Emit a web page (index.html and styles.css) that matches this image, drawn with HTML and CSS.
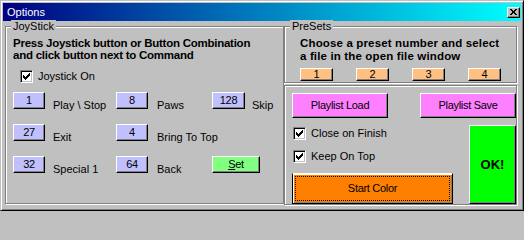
FILE: index.html
```html
<!DOCTYPE html>
<html>
<head>
<meta charset="utf-8">
<title>Options</title>
<link rel="stylesheet" href="styles.css">
</head>
<body>
<div class="window">
  <div class="titlebar">
    <span class="title">Options</span>
    <button class="close" aria-label="Close">
      <svg width="7" height="6" viewBox="0 0 7 6" shape-rendering="crispEdges"><path d="M0 0h2v1H0zM5 0h2v1H5zM1 1h2v1H1zM4 1h2v1H4zM2 2h3v2H2zM1 4h2v1H1zM4 4h2v1H4zM0 5h2v1H0zM5 5h2v1H5z" fill="#000"/></svg>
    </button>
  </div>
  <div class="client">
    <div class="group joy">
      <div class="legend">JoyStick</div>
      <p class="hint hint-left">Press Joystick button or Button Combination<br>and click button next to Command</p>
      <label class="check joy-on"><span class="box"><svg width="7" height="7" viewBox="0 0 7 7" shape-rendering="crispEdges"><path d="M6 0h1v1H6zM5 1h2v1H5zM0 2h1v1H0zM4 2h3v1H4zM0 3h2v1H0zM3 3h3v1H3zM0 4h5v1H0zM1 5h3v1H1zM2 6h1v1H2z" fill="#000"/></svg></span>Joystick On</label>
      <div class="cmds">
        <button class="btn cmd">1</button><span class="lbl l1">Play \ Stop</span>
        <button class="btn cmd">8</button><span class="lbl l2">Paws</span>
        <button class="btn cmd">128</button><span class="lbl l3">Skip</span>
        <button class="btn cmd">27</button><span class="lbl l1">Exit</span>
        <button class="btn cmd">4</button><span class="lbl l2">Bring To Top</span>
        <span class="empty"></span><span class="empty"></span>
        <button class="btn cmd">32</button><span class="lbl l1">Special 1</span>
        <button class="btn cmd">64</button><span class="lbl l2">Back</span>
        <button class="btn set"><u>S</u>et</button>
      </div>
    </div>
    <div class="right">
      <div class="group presets">
        <div class="legend">PreSets</div>
        <p class="hint hint-right">Choose a preset number and select<br>a file in the open file window</p>
        <div class="preset-row">
          <button class="btn preset">1</button>
          <button class="btn preset">2</button>
          <button class="btn preset">3</button>
          <button class="btn preset">4</button>
        </div>
      </div>
      <div class="group actions">
        <div class="playlists">
          <button class="btn playlist">Playlist Load</button>
          <button class="btn playlist">Playlist Save</button>
        </div>
        <div class="lower">
          <div class="opts">
            <label class="check opt first"><span class="box"><svg width="7" height="7" viewBox="0 0 7 7" shape-rendering="crispEdges"><path d="M6 0h1v1H6zM5 1h2v1H5zM0 2h1v1H0zM4 2h3v1H4zM0 3h2v1H0zM3 3h3v1H3zM0 4h5v1H0zM1 5h3v1H1zM2 6h1v1H2z" fill="#000"/></svg></span>Close on Finish</label>
            <label class="check opt"><span class="box"><svg width="7" height="7" viewBox="0 0 7 7" shape-rendering="crispEdges"><path d="M6 0h1v1H6zM5 1h2v1H5zM0 2h1v1H0zM4 2h3v1H4zM0 3h2v1H0zM3 3h3v1H3zM0 4h5v1H0zM1 5h3v1H1zM2 6h1v1H2z" fill="#000"/></svg></span>Keep On Top</label>
            <button class="btn start">Start Color</button>
          </div>
          <button class="btn ok">OK!</button>
        </div>
      </div>
    </div>
  </div>
</div>
</body>
</html>
```
FILE: styles.css
```css
* { box-sizing: border-box; }

body {
  margin: 0;
  background: #c0c0c0;
  font-family: "Liberation Sans", Arial, sans-serif;
  font-size: 11px;
  color: #000;
}

.window {
  width: 524px;
  height: 211px;
  border: 1px solid;
  border-color: #c0c0c0 #000 #000 #c0c0c0;
  box-shadow: inset 1px 1px #fff, inset -1px -1px #808080;
  padding: 2px;
  background: #c0c0c0;
}

.titlebar {
  height: 18px;
  display: flex;
  align-items: center;
  justify-content: space-between;
  padding: 0 1px 0 4px;
  background: linear-gradient(to right, #000080, #00ffff);
  color: #fff;
}

.title {
  font-size: 11px;
  line-height: 13px;
}

.close {
  appearance: none;
  margin: 0;
  padding: 0;
  width: 13px;
  height: 11px;
  display: flex;
  align-items: center;
  justify-content: center;
  background: #c0c0c0;
  border: 1px solid;
  border-color: #fff #000 #000 #fff;
  box-shadow: inset -1px -1px #808080;
}

.close svg { display: block; }

.client {
  display: flex;
  padding: 5px 0 0 2px;
}

.group {
  display: flex;
  flex-direction: column;
  border: 1px solid #808080;
  box-shadow: inset 1px 1px #fff, 1px 1px #fff;
}

.legend {
  align-self: flex-start;
  margin: -7px 0 0 5px;
  padding: 0 2px;
  line-height: 13px;
  background: #c0c0c0;
  white-space: nowrap;
}

.joy {
  width: 279px;
  height: 178px;
}

.hint {
  margin: 4px 0 0;
  font-weight: bold;
  font-size: 11.5px;
  white-space: nowrap;
}

.hint-left {
  padding-left: 7px;
  line-height: 12px;
  letter-spacing: -0.25px;
}

.hint-right {
  padding-left: 15px;
  line-height: 13px;
  letter-spacing: 0.15px;
}

.check {
  display: flex;
  align-items: center;
  gap: 5px;
  height: 13px;
  line-height: 13px;
  white-space: nowrap;
}

.box {
  width: 13px;
  height: 13px;
  display: flex;
  align-items: center;
  justify-content: center;
  background: #fff;
  border: 1px solid;
  border-color: #808080 #fff #fff #808080;
  box-shadow: inset 1px 1px #000, inset -1px -1px #c0c0c0;
}

.box svg { display: block; }

.joy-on {
  margin-top: 9px;
  padding-left: 14px;
}

.btn {
  appearance: none;
  margin: 0;
  padding: 0;
  font-family: "Liberation Sans", Arial, sans-serif;
  font-size: 11px;
  letter-spacing: -0.3px;
  color: #000;
  border: 1px solid;
  border-color: #fff #000 #000 #fff;
  box-shadow: inset -1px -1px #808080;
  display: flex;
  align-items: center;
  justify-content: center;
  line-height: 13px;
  white-space: nowrap;
}

.btn u { text-decoration: underline; }

.cmds {
  margin-top: 9px;
  padding-left: 7px;
  display: grid;
  grid-template-columns: 32px 71px 32px 64px 33px 1fr;
  grid-auto-rows: 20px;
  row-gap: 12px;
  align-items: start;
}

.cmd {
  height: 17px;
  background: #c0c0ff;
}

.lbl {
  padding-top: 7px;
  line-height: 13px;
  white-space: nowrap;
}

.l1 { padding-left: 8px; }
.l2 { padding-left: 9px; }
.l3 { padding-left: 7px; }

.set {
  grid-column: 5 / span 2;
  width: 48px;
  height: 17px;
  background: #80ff80;
}

.right {
  display: flex;
  flex-direction: column;
  width: 233px;
}

.presets {
  height: 57px;
}

.preset-row {
  display: flex;
  gap: 23px;
  margin-top: 5px;
  padding-left: 15px;
}

.preset {
  width: 33px;
  height: 13px;
  background: #ffc080;
  line-height: 11px;
}

.actions {
  margin-top: 2px;
  height: 120px;
  padding: 7px 0 0 7px;
}

.playlists {
  display: flex;
  justify-content: space-between;
}

.playlist {
  width: 96px;
  height: 25px;
  background: #ff80ff;
}

.lower {
  display: flex;
  flex: 1;
}

.opts {
  display: flex;
  flex-direction: column;
  align-items: flex-start;
}

.opt {
  margin: 10px 0 0 1px;
}

.opt.first {
  margin-top: 9px;
}

.start {
  margin-top: 10px;
  width: 161px;
  height: 31px;
  background: #ff8000;
  border-color: #fff #000 #000 #000;
  box-shadow: inset 1px 1px #fff, inset -1px -1px #808080;
  outline: 1px dotted #000;
  outline-offset: -4px;
}

.ok {
  margin: 7px 0 0 auto;
  width: 47px;
  height: 79px;
  background: #00ff00;
  font-weight: bold;
  font-size: 13px;
  letter-spacing: 0;
}
```
